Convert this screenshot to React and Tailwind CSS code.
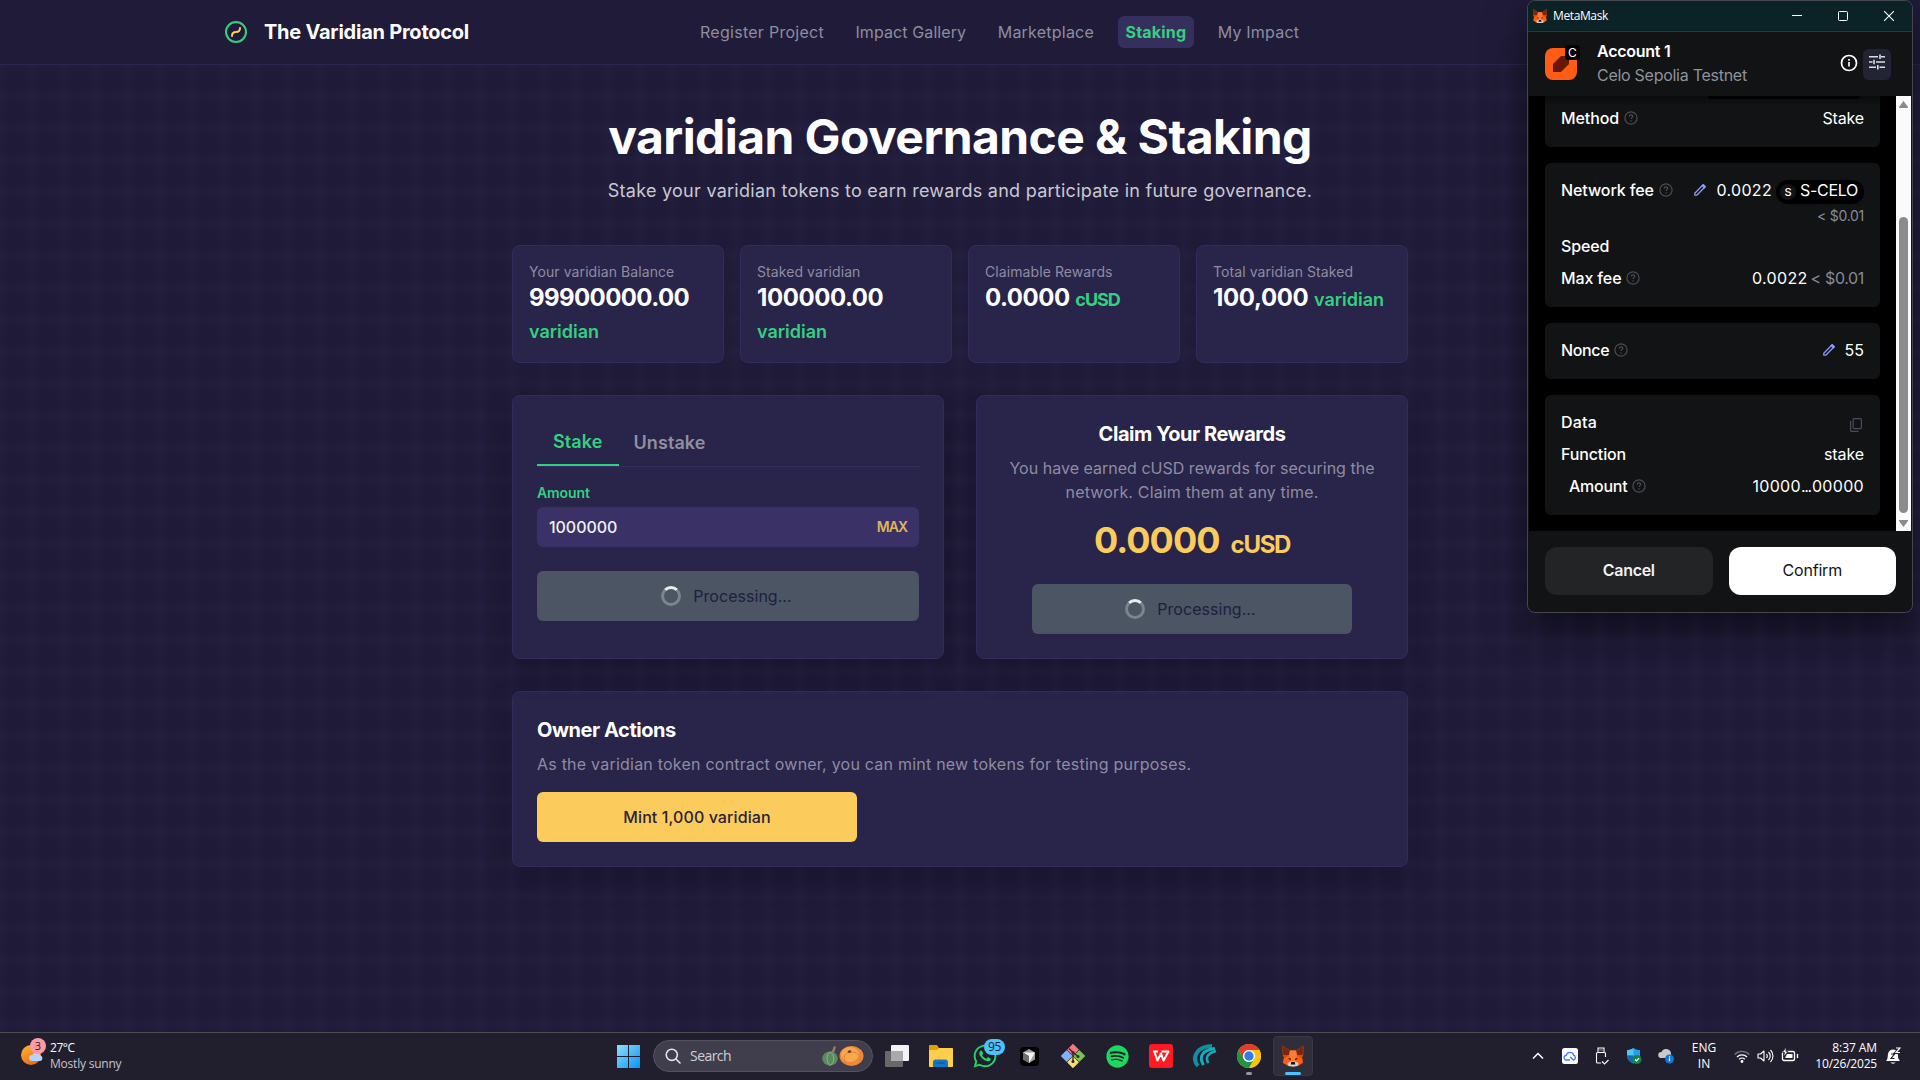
import { Battery } from "lucide-react";
import { FaSpotify, FaWhatsapp } from "react-icons/fa";

const NAV = [
  { label: "Register Project", className: "tracking-[0.017em] text-[#8e8d9f]" },
  { label: "Impact Gallery", className: "tracking-[0.006em] text-[#8e8d9f]" },
  { label: "Marketplace", className: "tracking-[0.014em] text-[#8e8d9f]" },
  { label: "Staking", className: "tracking-[0.012em] rounded-md bg-[#352f5e] font-bold text-[#35d07f]" },
  { label: "My Impact", className: "tracking-[0.012em] text-[#8e8d9f]" },
];

const STATS = [
  { label: "Your varidian Balance", value: "99900000.00", unit: "varidian", valueClass: "tracking-[-0.025em]", unitClass: "font-semibold tracking-[0em]" },
  { label: "Staked varidian", value: "100000.00", unit: "varidian", valueClass: "tracking-[-0.018em]", unitClass: "font-semibold tracking-[0em]" },
  { label: "Claimable Rewards", value: "0.0000", unit: "cUSD", valueClass: "tracking-[-0.02em]", unitClass: "font-bold tracking-[-0.058em]" },
  { label: "Total varidian Staked", value: "100,000", unit: "varidian", valueClass: "tracking-[-0.015em]", unitClass: "font-semibold tracking-[0em]" },
];

const CARD = "rounded-lg border border-[#332b5c] bg-[#29244a] shadow-[0_12px_28px_rgba(10,8,25,0.28)]";

function Fox({ className }) {
  return (
    <svg viewBox="0 0 24 24" className={className}>
      <path d="M1.500 1.500L9 6.500h6l7.500-5-.2 8.500-1.800 4.500 1.300 4.500-4.800 3-3-.5-2 1.500-2-1.500-3 .5-4.800-3 1.300-4.500L1.700 10z" fill="#ff5c16" />
      <path d="M1.500 1.500L9 6.500 8 11l-5 .5L1.700 10zM22.500 1.500L15 6.500l1 4.500 5 .5 1.300-1.500z" fill="#7a270d" />
      <path d="M9 6.500h6l1 5.500 1 6H7l1-6z" fill="#ff7a33" />
      <path d="M2.500 14.500l6-3 1.500 6-4 1-3.800.5zM21.500 14.500l-6-3-1.500 6 4 1 3.800.5z" fill="#ff5c16" />
      <path d="M3 14l5-2.500-5-.5-1.300-1zM21 14l-5-2.500 5-.5 1.300-1z" fill="#e34807" />
      <path d="M7 14l3.200.8-.9 1.400zM17 14l-3.200.8.9 1.400z" fill="#1a1412" />
      <path d="M6.500 19l3.500-1.500h4l3.500 1.500-1 3-3 .5h-3l-3-.5z" fill="#d9d3d0" />
      <path d="M10.200 18h3.600l.5 2.500H9.700z" fill="#1a1412" />
    </svg>
  );
}

function Spinner() {
  return <span className="size-5 rounded-full border-[3px] border-[#7c858d] border-t-[#ececef]" />;
}

function ProcessingButton({ className }) {
  return (
    <button className={`flex h-[50px] items-center justify-center gap-3 rounded-md bg-[#4b5563] pr-[3px] tracking-[0.002em] text-[#221d40] ${className}`}>
      <Spinner />
      <span>Processing...</span>
    </button>
  );
}

function SiteHeader() {
  return (
    <header className="flex h-[65px] items-center border-b border-[#2b2650] bg-[#1f1b3a]/80 pl-56">
      <div className="flex w-[468px] items-center gap-4">
        <svg viewBox="0 0 24 24" fill="none" className="size-6">
          <circle cx="12" cy="12" r="10" stroke="#35d07f" strokeWidth="2" />
          <path d="M8 16c0-3 1.500-4 4-4s4-1.500 4-4" stroke="#fbcc5c" strokeWidth="2" strokeLinecap="round" />
        </svg>
        <span className="text-xl font-bold tracking-[-0.012em] text-white">The Varidian Protocol</span>
      </div>
      <nav className="flex gap-[15.500px]">
        {NAV.map((n) => (
          <a key={n.label} className={`px-2 py-1 ${n.className}`}>
            {n.label}
          </a>
        ))}
      </nav>
    </header>
  );
}

function StakePanel() {
  return (
    <section className={`${CARD} p-6`}>
      <div className="flex h-[47px] items-stretch border-b border-[#352d5f] text-lg font-semibold">
        <span className="border-b-2 border-[#35d07f] px-4 py-2 tracking-[0.006em] text-[#35d07f]">Stake</span>
        <span className="px-[15px] py-[9px] tracking-[0.004em] text-[#918f9f]">Unstake</span>
      </div>
      <div className="mt-4 text-sm font-semibold tracking-[-0.008em] text-[#35d07f]">Amount</div>
      <div className="mt-1 flex h-10 items-center justify-between rounded-md bg-[#3a3266] px-3">
        <span className="font-medium tracking-[-0.003em] text-[#f1f1f4]">1000000</span>
        <span className="text-sm font-semibold tracking-[-0.07em] text-[#dfb55a]">MAX</span>
      </div>
      <ProcessingButton className="mt-6 w-full" />
    </section>
  );
}

function ClaimPanel() {
  return (
    <section className={`${CARD} flex flex-col items-center p-6 text-center`}>
      <h2 className="text-xl leading-7 font-bold tracking-[-0.022em] text-white">Claim Your Rewards</h2>
      <p className="mt-2 text-[#8e8d9f]">
        <span className="tracking-[0.001em]">You have earned cUSD rewards for securing the</span>
        <br />
        <span className="tracking-[0.01em]">network. Claim them at any time.</span>
      </p>
      <div className="mt-4 flex h-10 items-baseline gap-[11px] text-4xl leading-10 font-bold text-[#fbcc5c]">
        <span className="tracking-[-0.026em]">0.0000</span>
        <span className="text-2xl leading-none tracking-[-0.055em]">cUSD</span>
      </div>
      <ProcessingButton className="mt-6 w-80" />
    </section>
  );
}

function Page() {
  return (
    <div className="h-[1032px] w-full bg-[#1e1a37] bg-[linear-gradient(to_right,rgba(70,62,120,0.08),transparent_9px,transparent_23px,rgba(70,62,120,0.08)),linear-gradient(to_bottom,rgba(70,62,120,0.08),transparent_9px,transparent_23px,rgba(70,62,120,0.08))] bg-[length:32px_32px]">
      <SiteHeader />
      <main className="mx-auto w-[896px] pt-12">
        <h1 className="text-center text-5xl leading-none font-bold tracking-[-0.012em] whitespace-nowrap text-white">varidian Governance &amp; Staking</h1>
        <p className="mt-4 text-center text-lg leading-7 tracking-[0.0145em] whitespace-nowrap text-[#c9c9d1]">
          Stake your varidian tokens to earn rewards and participate in future governance.
        </p>
        <div className="mt-10 grid grid-cols-4 gap-4">
          {STATS.map((s) => (
            <div key={s.label} className="h-[118px] rounded-lg border border-[#332b5c] bg-[#29244a] p-4">
              <div className="text-sm tracking-[0.006em] whitespace-nowrap text-[#8e8d9f]">{s.label}</div>
              <div className="text-2xl leading-8 font-bold text-white">
                <span className={s.valueClass}>{s.value}</span> <span className={`text-lg leading-8 text-[#35d07f] ${s.unitClass}`}>{s.unit}</span>
              </div>
            </div>
          ))}
        </div>
        <div className="mt-8 grid grid-cols-2 gap-8">
          <StakePanel />
          <ClaimPanel />
        </div>
        <section className={`${CARD} mt-8 p-6`}>
          <h2 className="text-xl leading-7 font-bold tracking-[-0.022em] text-white">Owner Actions</h2>
          <p className="mt-2 tracking-[0.014em] text-[#8e8d9f]">As the varidian token contract owner, you can mint new tokens for testing purposes.</p>
          <button className="mt-4 flex h-[50px] w-80 items-center justify-center rounded-md bg-[#fbcc5c] font-medium tracking-[0.006em] text-[#2a2338]">
            Mint 1,000 varidian
          </button>
        </section>
      </main>
    </div>
  );
}

function Help() {
  return (
    <svg viewBox="0 0 14 14" fill="none" stroke="#4a4d57" strokeWidth="1.2" className="ml-[5px] size-3.5">
      <circle cx="7" cy="7" r="6.100" />
      <path d="M5.300 5.600c0-1 .7-1.700 1.700-1.700s1.700.6 1.700 1.500c0 1.200-1.600 1.300-1.600 2.600" />
      <path d="M7 9.200v1.200" />
    </svg>
  );
}

function Pencil() {
  return (
    <svg viewBox="0 0 12 12" fill="none" stroke="#8b99ff" strokeWidth="1.300" strokeLinejoin="round" className="size-3">
      <path d="M.8 11.200v-2L8.400 1.500l2 2L2.800 11.200z" />
      <path d="M8.200 1.600L9.300.6l2.100 2.100-1 1z" fill="#8b99ff" />
    </svg>
  );
}

function Row({ label, help, className = "", labelClass = "", children }) {
  return (
    <div className={`flex h-6 items-center justify-between ${className}`}>
      <div className="flex items-center">
        <span className={`font-medium ${labelClass}`}>{label}</span>
        {help && <Help />}
      </div>
      <div className="flex items-center">{children}</div>
    </div>
  );
}

const BOX = "rounded-md bg-[#121314] px-4 pt-[15px] pb-[17px]";

function WalletWindow() {
  return (
    <div className="absolute top-0 left-[1527px] flex h-[613px] w-[386px] flex-col overflow-hidden rounded-lg border border-[#45464c] bg-[#121314] text-white shadow-[0_18px_40px_rgba(0,0,0,0.5)]">
      <div className="flex h-[31px] items-center border-b border-[#24393b] bg-[#0b2226] pl-1 font-['Open_Sans',sans-serif]">
        <Fox className="size-4" />
        <span className="ml-[5px] text-xs tracking-[-0.032em]">MetaMask</span>
        <div className="mr-[18px] ml-auto flex items-center gap-9">
          <svg viewBox="0 0 10 10" stroke="white" className="size-2.5"><path d="M0 4.500h10" /></svg>
          <svg viewBox="0 0 10 10" fill="none" stroke="white" className="size-2.5"><rect x=".5" y=".5" width="9" height="9" rx="1" /></svg>
          <svg viewBox="0 0 10 10" stroke="white" strokeWidth="1.100" className="size-2.5"><path d="M0 0l10 10M10 0L0 10" /></svg>
        </div>
      </div>
      <div className="mx-px flex h-16 items-center pr-5 pl-4">
        <div className="relative size-8 rounded-lg bg-[#ff5c16]">
          <svg viewBox="0 0 32 32" className="size-8"><path d="M8 16l8-8h8v8l-8 8H8z" fill="#661800" /></svg>
          <span className="absolute -top-[3px] left-5 flex size-[15px] items-center justify-center rounded bg-black text-xs leading-none">C</span>
        </div>
        <div className="mb-[3px] ml-5">
          <div className="leading-6 font-semibold tracking-[-0.016em]">Account 1</div>
          <div className="leading-6 tracking-[-0.017em] text-[#8f929c]">Celo Sepolia Testnet</div>
        </div>
        <svg viewBox="0 0 18 18" fill="none" stroke="white" strokeWidth="1.700" className="mr-[5px] mb-0.5 ml-auto size-[18px]">
          <circle cx="9" cy="9" r="7.500" />
          <path d="M9 8v4.600M9 5v1.700" />
        </svg>
        <span className="flex h-[31px] w-7 items-center justify-center rounded-md bg-[#222433] pb-1">
          <svg viewBox="0 0 16 16" fill="none" stroke="#dcdde3" strokeWidth="1.600" className="size-4">
            <path d="M0 2.800h9M12 2.800h4M11 .5v4.600M0 8h3.500M7 8h9M5 5.700v4.600M0 13.200h7M10.500 13.200H16M8.800 10.900v4.600" />
          </svg>
        </span>
      </div>
      <div className="mx-px flex h-[435px] bg-black">
        <div className="flex w-[367px] flex-col gap-4 px-4">
          <div className="h-[51px] rounded-b-md bg-[linear-gradient(#0a0b0b,#121314_10px)] px-4">
            <div className="mr-1 ml-auto h-[3px] w-[152px] rounded-b-full bg-black" />
            <Row label="Method" help labelClass="tracking-[-0.006em]" className="mt-[7px]">
              <span className="tracking-[-0.01em]">Stake</span>
            </Row>
          </div>
          <div className={`${BOX} h-36`}>
            <Row label="Network fee" help labelClass="tracking-[-0.006em]">
              <Pencil />
              <span className="ml-2.5 tracking-[0.021em]">0.0022</span>
              <span className="mt-1 ml-1 flex h-6 items-center rounded-full bg-black pr-[6px] pl-1">
                <span className="mr-1 flex size-4 items-center justify-center rounded-full bg-[#121314] text-[11px] leading-none font-medium">S</span>
                <span className="-mt-1 tracking-[-0.019em]">S-CELO</span>
              </span>
            </Row>
            <div className="mt-1 text-right text-sm tracking-[-0.02em] text-[#858b98]">&lt; $0.01</div>
            <Row label="Speed" labelClass="tracking-[-0.008em]" className="mt-2" />
            <Row label="Max fee" help labelClass="tracking-[-0.008em]" className="mt-2">
              <span className="tracking-[0.021em]">0.0022</span>
              <span className="ml-[3px] tracking-[-0.022em] text-[#858b98]">&lt; $0.01</span>
            </Row>
          </div>
          <div className={`${BOX} h-14`}>
            <Row label="Nonce" help labelClass="tracking-[-0.022em]">
              <Pencil />
              <span className="ml-2.5">55</span>
            </Row>
          </div>
          <div className={`${BOX} flex h-[120px] flex-col gap-2`}>
            <Row label="Data" labelClass="tracking-[0.01em]">
              <svg viewBox="0 0 12 14" fill="none" stroke="#4a4d57" strokeWidth="1.200" className="mt-1.5 mr-0.5 h-3.5 w-3">
                <rect x="3.100" y=".6" width="8.300" height="10" rx="1" />
                <path d="M.6 3v9.400c0 .6.4 1 1 1H8.500" />
              </svg>
            </Row>
            <Row label="Function" labelClass="tracking-[-0.008em]">
              <span className="tracking-[-0.006em]">stake</span>
            </Row>
            <Row label="Amount" help labelClass="tracking-[-0.016em]" className="pl-2">
              <span>
                <span className="tracking-[0.02em]">10000</span>
                <span className="tracking-[-0.08em]">...</span>
                <span className="ml-px tracking-[0.02em]">00000</span>
              </span>
            </Row>
          </div>
        </div>
        <div className="flex w-[15px] flex-col items-center bg-[#fafafa]">
          <svg viewBox="0 0 9 7" fill="#8b8b8b" className="mt-[5px] h-[7px] w-[9px]"><path d="M4.500 0L9 6v1H0V6z" /></svg>
          <span className="mt-[109px] h-[296px] w-[9px] rounded-full bg-[#8b8b8b]" />
          <svg viewBox="0 0 9 7" fill="#8b8b8b" className="mt-[7px] h-[7px] w-[9px]"><path d="M4.500 7L9 1V0H0v1z" /></svg>
        </div>
      </div>
      <div className="grid grid-cols-2 gap-4 p-4 pl-[17px]">
        <button className="h-12 rounded-xl bg-[#232426] pb-0.5 font-semibold tracking-[-0.019em] text-[#f2f2f3]">Cancel</button>
        <button className="h-12 rounded-xl bg-white pb-0.5 tracking-[-0.012em] text-[#121314]">Confirm</button>
      </div>
    </div>
  );
}

function Slot({ children }) {
  return <div className="flex h-12 w-11 items-center justify-center">{children}</div>;
}

function Chrome() {
  return (
    <svg viewBox="0 0 24 24" className="size-6">
      <circle cx="12" cy="12" r="12" fill="#fbc116" />
      <path d="M1.600 6A12 12 0 0 1 22.400 6H12a6 6 0 0 0-5.200 9z" fill="#e33b2e" />
      <path d="M1.600 6A12 12 0 0 0 12 24l5.200-9A6 6 0 0 1 6.800 15z" fill="#229342" />
      <path d="M22.400 6H12a6 6 0 0 1 5.200 9L12 24A12 12 0 0 0 22.400 6z" fill="#fbc116" />
      <circle cx="12" cy="12" r="6" fill="white" />
      <circle cx="12" cy="12" r="4.700" fill="#2f7de9" />
    </svg>
  );
}

function Taskbar() {
  return (
    <footer className="flex h-12 w-full items-center border-t border-[#4c4b52] bg-[#211f2e] pb-px font-['Open_Sans',sans-serif] text-xs leading-4 text-white">
      <div className="flex w-[606px] items-center pl-5">
        <div className="relative h-8 w-[30px]">
          <svg viewBox="0 0 30 32" className="h-8 w-[30px]">
            <defs>
              <linearGradient id="sun" x1="0" y1="0" x2=".6" y2="1"><stop stopColor="#fbb934" /><stop offset="1" stopColor="#ee6a16" /></linearGradient>
            </defs>
            <circle cx="11" cy="15" r="10" fill="url(#sun)" />
            <path d="M12 21a3 3 0 0 1 .3-6 4.500 4.500 0 0 1 8.200.4A3 3 0 0 1 20.500 21z" fill="#b9d2fb" />
          </svg>
          <span className="absolute -top-0.5 left-2.5 flex size-4 items-center justify-center rounded-full bg-[#ff99a4] text-[11px] text-[#2a1a22]">3</span>
        </div>
        <div>
          <div className="tracking-[-0.04em]">27°C</div>
          <div className="tracking-[-0.018em] text-[#c5c4ca]">Mostly sunny</div>
        </div>
      </div>
      <div className="flex items-center">
        <Slot>
          <svg viewBox="0 0 23 23" className="size-[23px]">
            <defs>
              <linearGradient id="win" x1="0" y1="0" x2="1" y2="1"><stop stopColor="#8be0fd" /><stop offset="1" stopColor="#0a93f5" /></linearGradient>
            </defs>
            <path d="M0 0h11v11H0zM12 0h11v11H12zM0 12h11v11H0zM12 12h11v11H12z" fill="url(#win)" />
          </svg>
        </Slot>
        <div className="ml-[3px] flex h-8 w-[220px] items-center rounded-full border border-[#54525f] bg-[#403e4c] pr-2 pl-[11px]">
          <svg viewBox="0 0 16 16" fill="none" stroke="#e4e4e8" strokeWidth="1.600" strokeLinecap="round" className="size-4">
            <circle cx="6.800" cy="6.800" r="5.600" /><path d="M11 11l4 4" />
          </svg>
          <span className="ml-[9px] text-sm tracking-[-0.039em] text-[#cfced5]">Search</span>
          <svg viewBox="0 0 42 20" className="ml-auto h-5 w-[42px]">
            <path d="M9 6C11 4 11 2 12 0l2 1-2 6z" fill="#9a7a68" />
            <ellipse cx="8" cy="12.500" rx="7.800" ry="7" fill="#5c8a60" />
            <path d="M8 6C4 8 4 17 8 19.500M8 6c5 2 5 11 0 13.500" stroke="#8db488" fill="none" />
            <ellipse cx="29.500" cy="10" rx="12" ry="10" fill="#ee8a36" />
            <ellipse cx="28" cy="8.500" rx="9" ry="7.500" fill="#f9a750" />
            <path d="M27 6C21 8 21 14 25 19M29 6c6 0 10 3 9 9" stroke="#dd7526" fill="none" strokeWidth=".7" />
            <path d="M25.500 5l3-1 1 2.500-3 .5z" fill="#6b3a22" />
          </svg>
        </div>
        <div className="ml-0.5 flex">
          <Slot>
            <svg viewBox="0 0 24 22" className="h-[22px] w-6">
              <rect x="6" width="18" height="16" rx="1" fill="#f3f3f5" />
              <rect y="6" width="18" height="16" rx="1" fill="#686868" />
              <path d="M6 6h12v10H6z" fill="#aaaaac" />
            </svg>
          </Slot>
          <Slot>
            <svg viewBox="0 0 24 22" className="h-[22px] w-6">
              <path d="M0 1c0-.6.400-1 1-1h7l2 3v4H0z" fill="#e0a008" />
              <path d="M0 5h8l2-2h13c.6 0 1 .4 1 1v17c0 .6-.4 1-1 1H1c-.6 0-1-.4-1-1z" fill="#ffce4a" />
              <path d="M4 22v-5c0-1.500 1-2.500 2.500-2.500h10c1.500 0 2.500 1 2.500 2.500v5z" fill="#1176c8" />
              <path d="M7.500 18h8" stroke="#0a4f94" />
            </svg>
          </Slot>
          <Slot>
            <div className="relative">
              <FaWhatsapp className="size-[26px] text-[#25d366]" />
              <span className="absolute -top-1 left-3 flex h-4 w-[21px] items-center justify-center rounded-full bg-[#4cc2ff] tracking-tight text-[#12202c]">95</span>
            </div>
          </Slot>
          <Slot>
            <span className="flex size-[19px] items-center justify-center rounded bg-black">
              <svg viewBox="0 0 12 14" className="h-3.5 w-3">
                <path d="M6 0l6 3.500v7L6 14l-6-3.500v-7z" fill="#9b9b9b" />
                <path d="M0 3.500h12L6 14V7z" fill="#f4f4f4" /><path d="M0 3.500L6 7v7L0 10.500z" fill="#6e6e6e" />
              </svg>
            </span>
          </Slot>
          <Slot>
            <svg viewBox="0 0 24 24" className="size-6">
              <path d="M12 .3l5.400 5.400L12 11.200 6.600 5.700z" fill="#f5797e" stroke="#f5797e" strokeLinejoin="round" />
              <path d="M18.300 6.600l5.400 5.400-5.400 5.400-5.500-5.400z" fill="#7cc456" stroke="#7cc456" strokeLinejoin="round" />
              <path d="M5.700 6.600l5.500 5.400-5.500 5.400L.3 12z" fill="#80b1fa" stroke="#80b1fa" strokeLinejoin="round" />
              <path d="M12 12.800l5.400 5.500-5.400 5.400-5.400-5.400z" fill="#fadf6c" stroke="#fadf6c" strokeLinejoin="round" />
              <path d="M8 4.500l4 4v9M12 8.500l5 4" fill="none" stroke="#3a2530" strokeWidth="1.300" />
              <circle cx="12" cy="8.500" r="1.500" fill="#3a2530" /><circle cx="12" cy="17.500" r="1.500" fill="#3a2530" /><circle cx="17" cy="12.500" r="1.500" fill="#3a2530" />
            </svg>
          </Slot>
          <Slot><FaSpotify className="size-[23px] text-[#1ed760]" /></Slot>
          <Slot>
            <svg viewBox="0 0 24 24" className="size-6">
              <rect width="24" height="24" rx="3" fill="#ff1a24" />
              <path d="M4 7.500h5M5.500 8l3 8.500L12 9.500l2.500 7 5-9h-7" fill="none" stroke="white" strokeWidth="2" strokeLinejoin="round" />
            </svg>
          </Slot>
          <Slot>
            <svg viewBox="0 0 24 24" fill="none" className="size-6">
              <path d="M5 22C-1.500 14 3 2.500 19 2" stroke="#128ea2" strokeWidth="4" />
              <path d="M10.500 21C5.500 13 9 6 22 4.500" stroke="#18aeb9" strokeWidth="3" />
              <path d="M15.500 19c-3.500-5-1.500-9.500 7.500-12" stroke="#1fa3b3" strokeWidth="2.600" />
            </svg>
          </Slot>
          <Slot>
            <div className="relative">
              <Chrome />
              <span className="absolute -bottom-[7px] left-[9px] h-[3px] w-1.5 rounded-full bg-[#98979f]" />
            </div>
          </Slot>
          <Slot>
            <div className="relative flex size-10 items-center justify-center rounded border border-[#393744] bg-[#302e3b]">
              <Fox className="size-6" />
              <span className="absolute bottom-0 left-[11px] h-[3px] w-4 rounded-full bg-[#4cc2ff]" />
            </div>
          </Slot>
        </div>
      </div>
      <div className="ml-auto flex items-center">
        <span className="flex w-8 justify-center">
          <svg viewBox="0 0 12 8" fill="none" stroke="white" strokeWidth="1.500" className="h-2 w-3"><path d="M1 6.500l5-5 5 5" /></svg>
        </span>
        <span className="flex w-8 justify-center">
          <svg viewBox="0 0 16 16" className="size-4">
            <rect width="16" height="16" rx="2.500" fill="white" />
            <path d="M8 12H4.500a2.300 2.300 0 0 1-.3-4.600 3.800 3.800 0 0 1 7.400-.2A2.500 2.500 0 0 1 11.500 12L8 9" fill="none" stroke="#3c7df0" strokeWidth="1.300" />
          </svg>
        </span>
        <span className="flex w-8 justify-center">
          <svg viewBox="0 0 14 18" fill="none" stroke="white" strokeWidth="1.100" className="h-[18px] w-3.5">
            <path d="M3 5.500V1h6v4.500M6 16H2.500c-.6 0-1-.4-1-1V6.500c0-.6.400-1 1-1h7c.6 0 1 .4 1 1V10M4.500 3h1M6.500 3h1M7 14.500l2.500 2.500 4-4" />
          </svg>
        </span>
        <span className="flex w-8 justify-center">
          <svg viewBox="0 0 16 16" className="size-4">
            <path d="M7.500 0c2 1.500 4 2 6.500 2v6c0 3.500-3 6-6.500 7.500C4 14 1 11.500 1 8V2c2.500 0 4.500-.5 6.500-2z" fill="#2b9af0" />
            <path d="M7.500 0v7.500H1V2c2.500 0 4.500-.5 6.500-2z" fill="#4cc8f5" />
            <path d="M7.500 7.500v8C4 14 1 11.500 1 8v-.5z" fill="#1767b5" />
            <circle cx="11" cy="11.500" r="4.500" fill="#10893e" /><path d="M9 11.500l1.500 1.500 2.500-2.800" fill="none" stroke="white" strokeWidth="1.200" />
          </svg>
        </span>
        <span className="flex w-8 justify-center">
          <svg viewBox="0 0 16 16" className="size-4">
            <path d="M3 10a3 3 0 0 1 .5-6 5 5 0 0 1 9.500 1v5z" fill="#c9c9cc" />
            <circle cx="11.500" cy="11" r="4.500" fill="#0f78d4" /><path d="M11.500 10.300v3M11.500 8.300v1.200" stroke="white" strokeWidth="1.200" />
          </svg>
        </span>
        <div className="w-11 text-center"><div>ENG</div><div>IN</div></div>
        <div className="ml-1 flex w-[72px] items-center justify-around">
          <svg viewBox="0 0 16 13" fill="none" stroke="white" strokeWidth="1.300" className="h-[13px] w-4">
            <path d="M.7 4.500a10.300 10.300 0 0 1 14.600 0" stroke="#77757f" /><path d="M3 7a7 7 0 0 1 10 0M5.200 9.300a4 4 0 0 1 5.600 0" /><circle cx="8" cy="11.500" r=".8" fill="white" />
          </svg>
          <svg viewBox="0 0 17 14" fill="none" stroke="white" strokeWidth="1.100" strokeLinejoin="round" className="h-3.5 w-[17px]">
            <path d="M1 5v4h2.500L7 12V2L3.500 5zM9.500 5c1 1.200 1 2.800 0 4M11.500 3c2.300 2.300 2.300 5.700 0 8M13.500 1c3.300 3.400 3.300 8.600 0 12" />
          </svg>
          <span className="relative">
            <Battery className="size-[18px] text-white" strokeWidth={1.800} />
            <svg viewBox="0 0 18 18" className="absolute top-0 left-0 size-[18px]">
              <path d="M6 7h5.500v4H4z" fill="white" />
              <path d="M5 0L1.500 5.500h2L2.500 10 7 4.500H5z" fill="white" stroke="#211f2e" strokeWidth=".8" />
            </svg>
          </span>
        </div>
        <div className="w-[75px] text-right">
          <div className="tracking-[-0.006em]">8:37 AM</div>
          <div className="tracking-[-0.017em]">10/26/2025</div>
        </div>
        <svg viewBox="0 0 16 18" className="mr-[19px] ml-2 h-[18px] w-4">
          <path d="M1 14c2-2 1.500-4 2-7 .5-3 2.500-4.500 5-4.500 4 0 5 3 5 6.500 0 2 .5 3.500 2 5zM5.500 15.500h5c-.5 1.500-4.500 1.500-5 0z" fill="white" />
          <path d="M6 7h3.500L6 11.500h3.500" fill="none" stroke="#211f2e" strokeWidth="1.200" />
          <path d="M11 1h4l-4 4.500h4" fill="none" stroke="#211f2e" strokeWidth="3" />
          <path d="M11 1h4l-4 4.500h4" fill="none" stroke="white" strokeWidth="1.200" />
        </svg>
      </div>
    </footer>
  );
}

export default function App() {
  return (
    <div className="relative h-[1080px] w-[1920px] overflow-hidden font-['Inter',sans-serif]">
      <Page />
      <Taskbar />
      <WalletWindow />
    </div>
  );
}
